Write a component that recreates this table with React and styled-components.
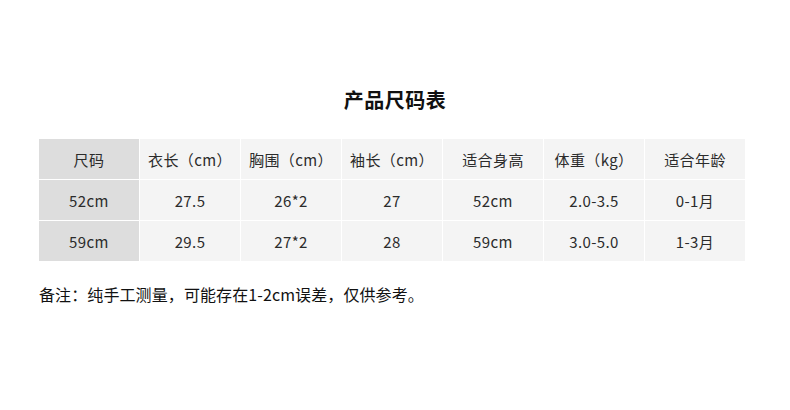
import React from "react";
import styled, { createGlobalStyle } from "styled-components";

const GlobalStyle = createGlobalStyle`
  body {
    margin: 0;
    background: #ffffff;
    font-family: "Noto Sans CJK SC", sans-serif;
  }
`;

const Page = styled.div`
  width: 790px;
  height: 410px;
  display: flex;
  flex-direction: column;
  align-items: flex-start;
  padding: 86px 0 0 39px;
  box-sizing: border-box;
`;

const Title = styled.h1`
  align-self: stretch;
  margin: 0 0 0 -39px;
  text-align: center;
  font-size: 20px;
  line-height: 28px;
  font-weight: 700;
  color: #111111;
  letter-spacing: 0.5px;
`;

const Table = styled.div`
  margin-top: 25px;
  width: 706px;
  display: grid;
  grid-template-columns: repeat(7, 1fr);
  grid-auto-rows: 40px;
  gap: 1px;
  background: #ffffff;
`;

const Cell = styled.div`
  display: flex;
  align-items: center;
  justify-content: center;
  background: ${(props) => (props.head ? "#dddddd" : "#f4f4f4")};
  color: #2b2b2b;
  font-size: 15px;
  font-weight: 400;
  white-space: nowrap;
  letter-spacing: 0.4px;
`;

const Note = styled.p`
  margin: 22px 0 0 0;
  font-size: 16px;
  line-height: 22px;
  color: #111111;
  letter-spacing: 0.1px;
`;

const header = ["尺码", "衣长（cm）", "胸围（cm）", "袖长（cm）", "适合身高", "体重（kg）", "适合年龄"];

const rows = [
  ["52cm", "27.5", "26*2", "27", "52cm", "2.0-3.5", "0-1月"],
  ["59cm", "29.5", "27*2", "28", "59cm", "3.0-5.0", "1-3月"],
];

export default function App() {
  return (
    <>
      <GlobalStyle />
      <Page>
        <Title>产品尺码表</Title>
        <Table>
          {header.map((text, i) => (
            <Cell key={"h" + i} head={i === 0}>
              {text}
            </Cell>
          ))}
          {rows.map((row, r) =>
            row.map((text, i) => (
              <Cell key={r + "-" + i} head={i === 0}>
                {text}
              </Cell>
            ))
          )}
        </Table>
        <Note>备注：纯手工测量，可能存在1-2cm误差，仅供参考。</Note>
      </Page>
    </>
  );
}
